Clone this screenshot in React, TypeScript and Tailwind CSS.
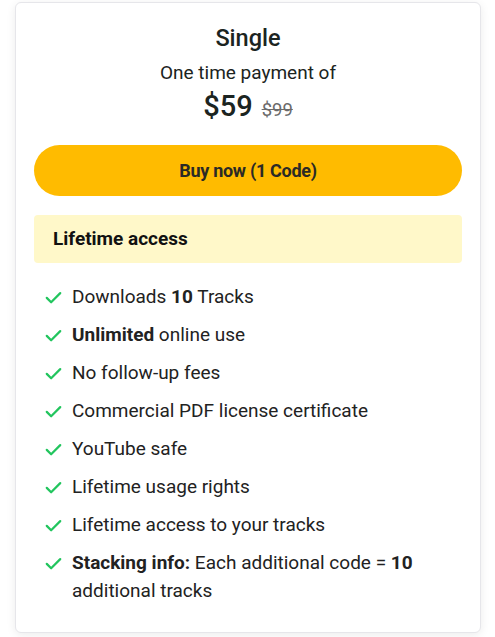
import React from 'react';

const Check = () => (
  <svg className="w-[19px] h-[19px] text-[#22c55e] shrink-0 mt-[5px]" viewBox="0 0 24 24" fill="none" stroke="currentColor" strokeWidth={2.8} strokeLinecap="round" strokeLinejoin="round" aria-hidden="true">
    <path d="M3.5 12.5l5.5 5.5L20.5 6.5" />
  </svg>
);

const features: React.ReactNode[] = [
  <>Downloads <b className="font-bold">10</b> Tracks</>,
  <><b className="font-bold">Unlimited</b> online use</>,
  <>No follow-up fees</>,
  <>Commercial PDF license certificate</>,
  <>YouTube safe</>,
  <>Lifetime usage rights</>,
  <>Lifetime access to your tracks</>,
  <><b className="font-bold">Stacking info:</b> Each additional code = <b className="font-bold">10</b> additional tracks</>,
];

export default function App() {
  return (
    <div className="min-h-screen bg-white pt-[2px] px-[15px]" style={{ fontFamily: 'Roboto, "Noto Sans", sans-serif' }}>
      <div className="w-[466px] bg-white border border-[#e6e6ea] rounded-md shadow-[0_2px_10px_rgba(0,0,0,0.08)] px-[18px] pt-[21px] pb-[27px]">
        {/* Header */}
        <div className="text-center text-[#1b2421]">
          <h2 className="text-[23.5px] leading-[28px] font-medium">Single</h2>
          <p className="mt-[9px] text-[19px] leading-[24px]">One time payment of</p>
          <div className="mt-[3px] flex items-baseline justify-center gap-[9px]">
            <span className="text-[29px] leading-[36px] font-medium">$59</span>
            <span className="text-[18.5px] text-[#6b6b6b] line-through">$99</span>
          </div>
        </div>

        {/* Button */}
        <button className="mt-[20px] w-full h-[51px] rounded-full bg-[#ffbb00] text-[#2b2a26] text-[18px] font-bold tracking-[-0.3px]">
          Buy now (1 Code)
        </button>

        {/* Lifetime */}
        <div className="mt-[19px] h-[48px] rounded bg-[#fff8c9] flex items-center px-[19px] text-[19px] font-bold text-[#111]">
          Lifetime access
        </div>

        {/* Features */}
        <ul className="mt-[20px] pl-[10px] flex flex-col gap-[10px] text-[19px] leading-[28px] text-[#222]">
          {features.map((f, i) => (
            <li key={i} className="flex gap-[9px]">
              <Check />
              <span>{f}</span>
            </li>
          ))}
        </ul>
      </div>
    </div>
  );
}
